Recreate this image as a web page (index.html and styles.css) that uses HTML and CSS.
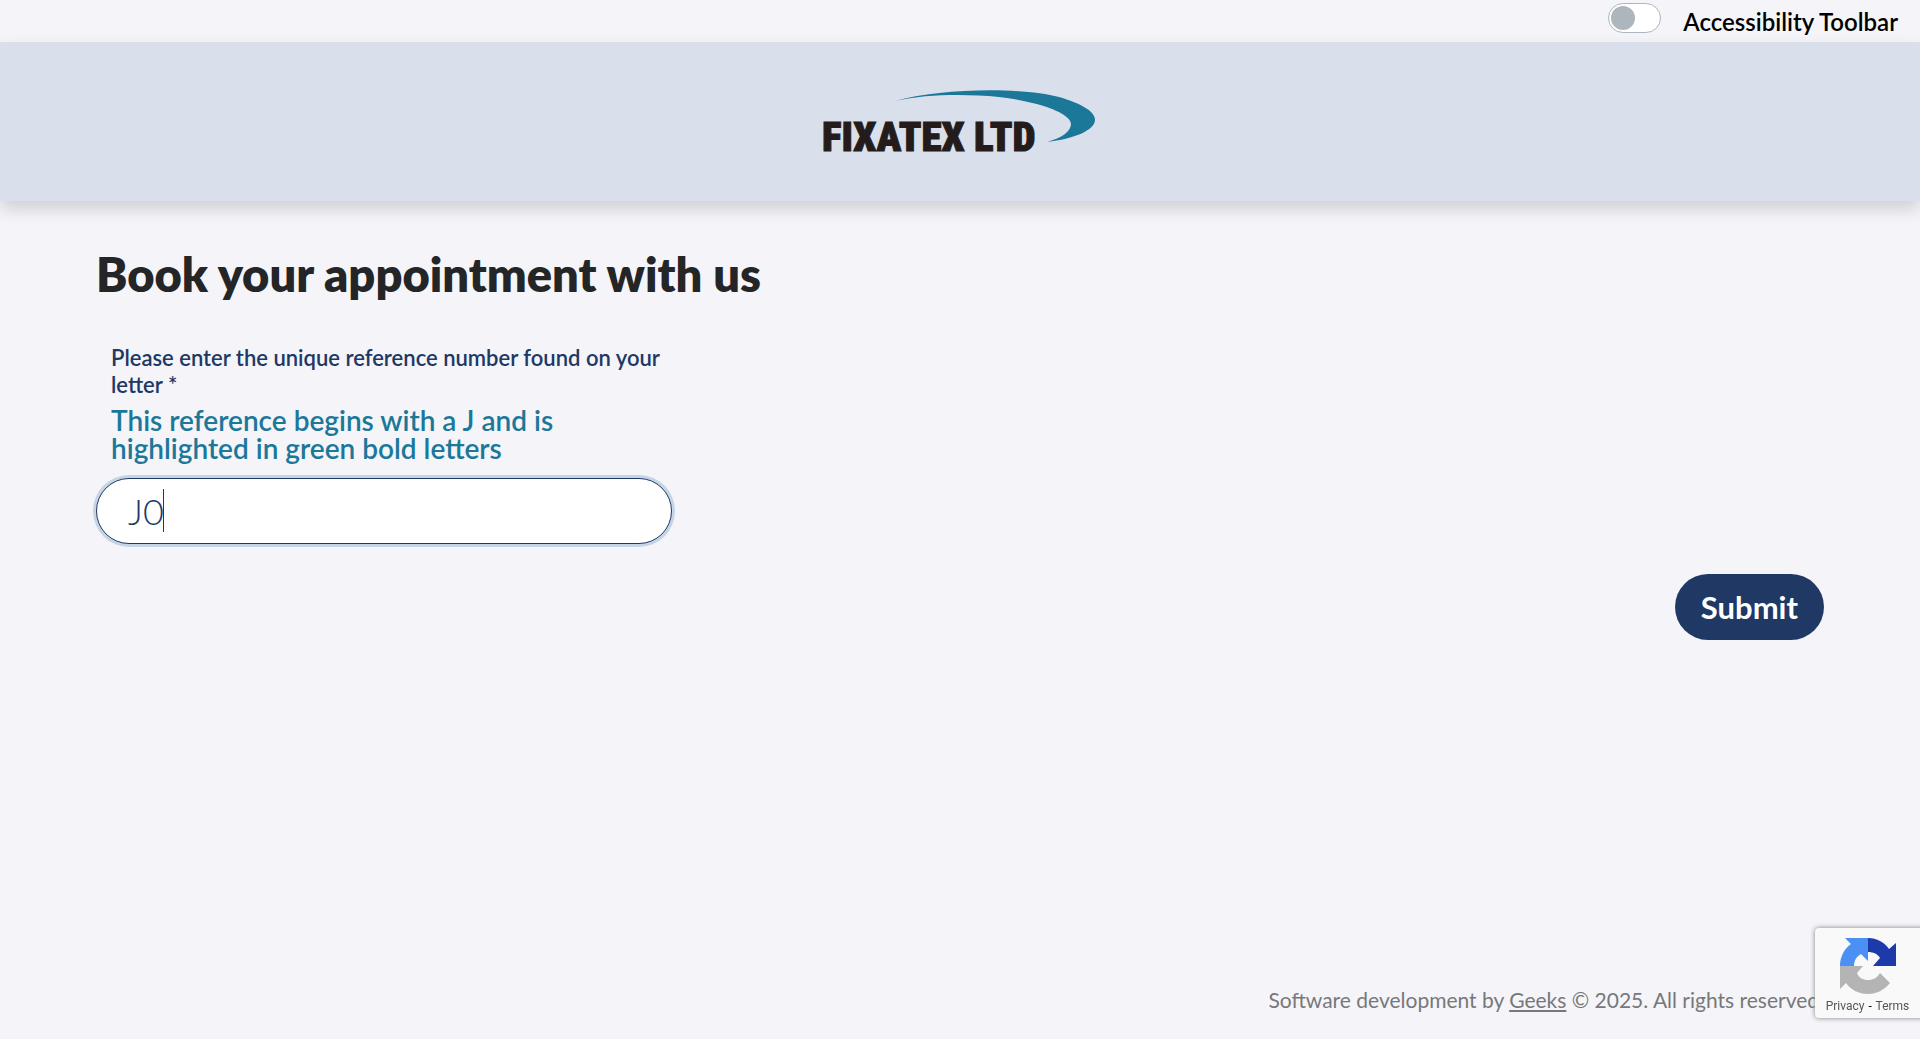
FILE: index.html
```html
<!DOCTYPE html>
<html lang="en">

<head>
    <meta charset="UTF-8">
    <meta name="viewport" content="width=device-width, initial-scale=1">
    <title>Book your appointment</title>
    <link rel="stylesheet" href="styles.css">
</head>

<body>
    <div class="toolbar">
        <input type="checkbox" id="accessibility" class="switch">
        <label for="accessibility">Accessibility Toolbar</label>
    </div>

    <header class="site-header">
        <svg class="logo" viewBox="0 0 276 78" role="img" aria-label="Fixatex Ltd">
            <text class="logo-text" x="0" y="61">FIXATEX LTD</text>
            <path fill="#1b7899" d="M73 11 C118 -2 200 -3 237 7 C261 14 273 22 273 30 C273 40 252 49 225 52 C240 48 249 41 249 34 C249 24 220 12 177 7 C143 4 105 4 73 11z" />
        </svg>
    </header>

    <main>
        <h1>Book your appointment with us</h1>
        <form>
            <div class="field">
                <label for="reference">Please enter the unique reference number found on your letter *</label>
                <p class="hint">This reference begins with a J and is highlighted in green bold letters</p>
                <div class="input-wrap">
                    <input type="text" id="reference" value="J0" autocomplete="off">
                    <span class="caret"></span>
                </div>
            </div>
            <div class="actions">
                <button type="submit">Submit</button>
            </div>
        </form>
    </main>

    <footer>
        <p>Software development by <a href="#">Geeks</a> © 2025. All rights reserved.</p>
    </footer>

    <aside class="recaptcha">
        <svg viewBox="0 0 56 56" aria-hidden="true">
            <path fill="#1c3aa9" d="M28 0 C37 0 44 4 49 11 L56 5 V28 H33 L40 20 C38 16 33 14 28 14z" />
            <path fill="#4a90f5" d="M28 0 H5 L11 6 C4 11 0 19 0 28 H14 C14 23 16 19 21 16 L28 23z" />
            <path fill="#b4b4b4" d="M0 28 H23 L17 35 C19 40 23 42 28 42 C33 42 37 40 40 35 L50 45 C44 52 37 56 28 56 C19 56 11 52 6 45 L0 51z" />
        </svg>
        <p><a href="#">Privacy</a> <span>-</span> <a href="#">Terms</a></p>
    </aside>
</body>

</html>
```
FILE: styles.css
```css
* {
    box-sizing: border-box;
    margin: 0;
    padding: 0;
}

body {
    display: flex;
    flex-direction: column;
    min-height: 100vh;
    background-color: #f4f4f9;
    color: #242526;
    font-family: Lato, sans-serif;
    font-size: 22px;
    overflow-x: hidden;
}

.toolbar {
    display: flex;
    align-items: center;
    justify-content: flex-end;
    gap: 22px;
    height: 42px;
    padding: 0 22px 6px 0;
    color: #000;
}

.toolbar label {
    padding-top: 6px;
    font-size: 24px;
    font-weight: 600;
}

.switch {
    appearance: none;
    display: flex;
    width: 53px;
    height: 30px;
    padding: 2px;
    background: #fff;
    border: 1px solid #adb5bd;
    border-radius: 15px;
    cursor: pointer;
}

.switch::before {
    content: "";
    width: 24px;
    height: 24px;
    border-radius: 50%;
    background: #adb5bd;
}

.switch:checked {
    justify-content: flex-end;
}

.site-header {
    display: flex;
    justify-content: center;
    padding: 48px 0 33px;
    background-color: #d9e0ec;
    box-shadow: 0 8px 16px rgba(0, 0, 0, 0.15);
}

.logo {
    width: 276px;
    height: 78px;
}

.logo-text {
    font-family: "Roboto Condensed", "Liberation Sans Narrow", "Liberation Sans", sans-serif;
    font-weight: 900;
    font-size: 41px;
    fill: #231c1a;
    stroke: #231c1a;
    stroke-width: 1px;
}

main {
    flex: 1;
    padding: 44px 5%;
}

h1 {
    font-size: 47px;
    font-weight: 800;
    line-height: 58px;
    margin-bottom: 41px;
}

.field {
    width: 33.333%;
    color: #203864;
}

.field label {
    display: block;
    padding-left: 15px;
    font-size: 22px;
    font-weight: 600;
    line-height: 27px;
}

.hint {
    padding: 8px 60px 0 15px;
    color: #1b7899;
    font-size: 28px;
    font-weight: 600;
    line-height: 28px;
}

.input-wrap {
    position: relative;
    margin-top: 16px;
}

.field input {
    display: block;
    width: 100%;
    height: 66px;
    padding: 0 31px;
    background: #fff;
    border: 1px solid #203864;
    border-radius: 33px;
    box-shadow: 0 0 0 3px #c5d5e6;
    color: #203864;
    font-family: inherit;
    font-size: 36px;
    font-weight: 300;
    outline: none;
}

.caret {
    position: absolute;
    top: 11px;
    left: 67px;
    width: 1px;
    height: 43px;
    background: #203864;
}

.actions {
    display: flex;
    justify-content: flex-end;
    margin-top: 30px;
}

button {
    height: 66px;
    padding: 0 26px;
    background-color: #203864;
    border: none;
    border-radius: 33px;
    color: #fff;
    font-family: inherit;
    font-size: 31px;
    font-weight: 700;
    cursor: pointer;
}

footer {
    padding: 0 5% 25px;
    color: #77787b;
    font-size: 21px;
    text-align: right;
}

footer p {
    line-height: 28px;
}

footer a {
    color: inherit;
}

.recaptcha {
    position: fixed;
    right: -8px;
    bottom: 21px;
    width: 113px;
    height: 90px;
    padding: 10px 8px 0 0;
    border-radius: 4px;
    background: #f9f9f9;
    box-shadow: 0 0 5px #808080;
    text-align: center;
}

.recaptcha svg {
    display: block;
    width: 56px;
    height: 56px;
    margin: 0 auto;
}

.recaptcha p {
    color: #000;
    font-family: Roboto, sans-serif;
    font-size: 12px;
    line-height: 24px;
}

.recaptcha span {
    padding: 0 1px;
}

.recaptcha a {
    color: #555;
    text-decoration: none;
}
```
